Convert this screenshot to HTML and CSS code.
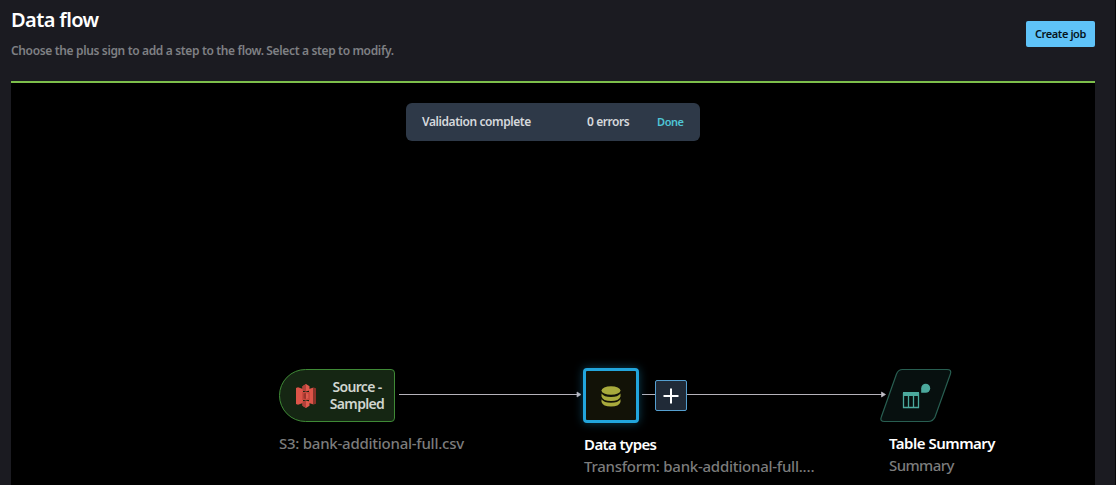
FILE: index.html
```html
<!DOCTYPE html>
<html lang="en">
<head>
<meta charset="utf-8">
<title>Data flow</title>
<link rel="stylesheet" href="styles.css">
</head>
<body>
<main class="page">
  <header class="header">
    <div class="heading">
      <h1 class="title">Data flow</h1>
      <p class="subtitle">Choose the plus sign to add a step to the flow. Select a step to modify.</p>
    </div>
    <button class="create">Create job</button>
  </header>
  <section class="canvas">
    <div class="toast">
      <span class="toast-status">Validation complete</span>
      <span class="toast-errors">0 errors</span>
      <a class="toast-done">Done</a>
    </div>
    <svg class="edges" width="1084" height="402" viewBox="11 83 1084 402">
      <g stroke="#b5b2ba" fill="#c5c2ca">
        <path d="M399 394.5H578M642 394.5H655M687 394.5H882"/>
        <path d="M577 392l4 2.500-4 2.500zM881.500 392l4 2.500-4 2.500z" stroke-width=".7"/>
      </g>
      <path d="M902.500 369.500H947Q952 369.500 950.400 374L935 417Q933 421.500 928 421.500H884.500Q879.500 421.500 881.300 417L896.500 374Q898.300 369.500 902.500 369.500Z" fill="#07100f" stroke="#285e51" stroke-width="1.200"/>
      <path d="M903.500 393v14.500h15V393M908.500 395v12.500M913.500 395v12.500" fill="none" stroke="#4ba99d" stroke-width="1.300"/>
      <path d="M903 392h16v4h-16z" fill="#4ba99d"/>
      <path d="M921.200 392.800V388.300A4.500 4.500 0 1 1 925.700 392.800Z" fill="#4ba99d"/>
    </svg>
    <div class="node source">
      <svg width="22" height="26" viewBox="295 383 22 26">
        <path d="M296 388l2-.8 5 1.800v14l-5 1.800-2-.8z" fill="#dc5448"/>
        <path d="M309 389l4.500-1.600v17.200L309 403z" fill="#dc5448"/>
        <path d="M313.500 387.400l2.500.8v15.600l-2.500.8z" fill="#8c3129"/>
        <path d="M302 392h8v8h-8z" fill="#c9483d"/>
        <path d="M306 384l3.500 2.200v4.300l-3.500 1-3.500-1v-4.300zM306 408l3.500-2.200v-4.300l-3.500-1-3.500 1v4.300z" fill="#e05a4d"/>
        <path d="M306 384l-3.500 2.200v4.300l3.500 1zM306 408l-3.500-2.200v-4.300l3.500-1z" fill="#b3413a"/>
        <path d="M303.500 393.500l2.500-.6 2.500.6v5l-2.500.6-2.500-.6z" fill="#9b352d"/>
        <path d="M306 392.900l2.500.6v5l-2.500.6z" fill="#df5a4e"/>
      </svg>
      <span class="source-name">Source -<br>Sampled</span>
    </div>
    <div class="label source-label"><span class="muted">S3: bank-additional-full.csv</span></div>
    <div class="node types">
      <svg width="22" height="22" viewBox="600 384 22 22" fill="#a8aa3c">
        <ellipse cx="611" cy="389.500" rx="9.500" ry="4.300"/>
        <path d="M601.500 392.500Q604 396 611 396T620.500 392.500V395.500Q619 400 611 400T601.500 395.500ZM601.500 398.200Q604 401.700 611 401.700T620.500 398.200V401Q619 405.500 611 405.500T601.500 401Z"/>
      </svg>
    </div>
    <button class="node add" aria-label="Add step">
      <svg width="16" height="16" viewBox="0 0 16 16"><path d="M8 .5v15M.5 8h15" stroke="#fff" stroke-width="2"/></svg>
    </button>
    <div class="label types-label"><strong class="types-title">Data types</strong><span class="muted">Transform: bank-additional-full.…</span></div>
    <div class="label summary-label"><strong class="summary-title">Table Summary</strong><span class="muted summary-kind">Summary</span></div>
  </section>
</main>
</body>
</html>
```
FILE: styles.css
```css
* { box-sizing: border-box; }
body {
  margin: 0;
  overflow: hidden;
  background: #1b1b21;
  color: #fff;
  font-family: "Noto Sans", sans-serif;
}
.page {
  display: flex;
  flex-direction: column;
  height: 485px;
  padding: 0 20px 0 11px;
  border-right: 1px solid #08080a;
}
.header {
  display: flex;
  justify-content: space-between;
  height: 81px;
}
.title {
  margin: 6px 0 0;
  font-size: 20px;
  line-height: 28px;
  font-weight: 600;
  letter-spacing: -.6px;
}
.subtitle {
  margin: 8px 0 0;
  font-size: 12px;
  line-height: 18px;
  font-weight: 600;
  color: #7f8084;
  letter-spacing: -.35px;
}
.create {
  width: 69px;
  height: 26px;
  margin-top: 21px;
  padding: 0;
  border: 0;
  border-radius: 2px;
  background: #5fc3f8;
  color: #06141c;
  font: 600 11px/26px "Noto Sans", sans-serif;
  letter-spacing: -.4px;
  white-space: nowrap;
}
.canvas {
  position: relative;
  flex: 1;
  border-top: 2px solid #7dbf4b;
  background: #000;
}
.toast {
  display: flex;
  align-items: center;
  width: 294px;
  height: 38px;
  margin: 20px 0 0 395px;
  padding: 0 16px 2px;
  border-radius: 6px;
  background: #2e3948;
  color: #d5d8dc;
  font-size: 12px;
  font-weight: 600;
  letter-spacing: -.42px;
  white-space: nowrap;
}
.toast-status { width: 165px; }
.toast-errors { width: 70px; }
.toast-done { padding-top: 1px; color: #4fc5d6; font-size: 11px; }
.edges { position: absolute; left: 0; top: 0; }
.node { position: absolute; display: flex; align-items: center; }
.node svg { flex: none; }
.source {
  left: 268px;
  top: 286px;
  width: 116px;
  height: 53px;
  padding-left: 15px;
  border: 1px solid #3f8a36;
  border-radius: 27px 4px 4px 27px;
  background: #152613;
}
.source-name {
  width: 74px;
  margin-left: 3px;
  padding-bottom: 2px;
  font-size: 14px;
  line-height: 17px;
  font-weight: 600;
  text-align: center;
  color: #d0d5cf;
  letter-spacing: -.65px;
}
.types {
  left: 572px;
  top: 285px;
  width: 56px;
  height: 55px;
  justify-content: center;
  border: 3px solid #22a5dc;
  border-radius: 4px;
  background: #121207;
  box-shadow: 0 0 10px rgba(28, 145, 190, .45);
}
.add {
  left: 644px;
  top: 297px;
  width: 32px;
  height: 31px;
  padding: 0;
  justify-content: center;
  border: 1px solid #559fd0;
  border-radius: 2px;
  background: #202a37;
}
.label {
  position: absolute;
  display: flex;
  flex-direction: column;
  font-size: 15px;
  line-height: 22px;
  font-weight: 500;
  white-space: nowrap;
}
.label strong { font-weight: 600; }
.muted { color: #7c7c7c; letter-spacing: -.25px; }
.types-title { letter-spacing: -.6px; }
.summary-title { letter-spacing: -.5px; }
.summary-kind { letter-spacing: -.6px; }
.source-label { left: 268px; top: 349px; }
.types-label { left: 573px; top: 350px; }
.summary-label { left: 878px; top: 349px; }
```
